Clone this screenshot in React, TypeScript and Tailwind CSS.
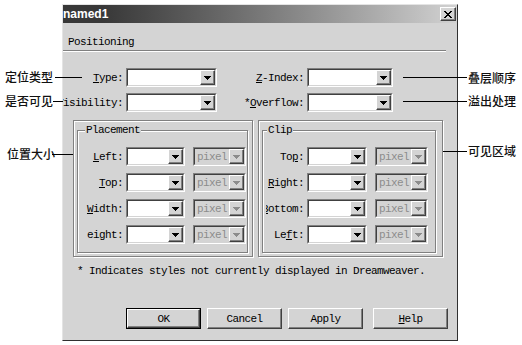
import React from "react";

const mono = "font-['Liberation_Mono',monospace] text-[11px] leading-[12px] tracking-[-0.6px]";
const cjk = "font-['Noto_Sans_CJK_SC',sans-serif] font-medium text-[12px] leading-[14px] text-[#111]";

function Arrow({ disabled }: { disabled?: boolean }) {
  return (
    <svg width="7" height="4" viewBox="0 0 7 4" shapeRendering="crispEdges">
      <path d="M0 0H7V1H6V2H5V3H4V4H3V3H2V2H1V1H0Z" fill={disabled ? "#8c8c8c" : "#000"} />
    </svg>
  );
}

function Combo({ w, disabled, value, className = "" }: { w: string; disabled?: boolean; value?: string; className?: string }) {
  return (
    <div className={`${w} ${className} h-[19px] shrink-0 border border-t-[#808080] border-l-[#808080] border-b-white border-r-white`}>
      <div
        className={`flex h-full border border-t-[#404040] border-l-[#404040] border-b-[#d4d4d4] border-r-[#d4d4d4] ${
          disabled ? "bg-[#d4d4d4]" : "bg-white"
        }`}
      >
        <div className={`flex-1 flex items-center pl-[2px] ${mono} ${disabled ? "text-[#8c8c8c]" : "text-black"}`}>{value}</div>
        <div className="w-[15px] h-full flex items-center justify-center bg-[#d4d4d4] border border-t-white border-l-white border-b-[#404040] border-r-[#404040] shadow-[inset_-1px_-1px_0_#808080]">
          <Arrow disabled={disabled} />
        </div>
      </div>
    </div>
  );
}

function Label({ w, children, className = "" }: { w: string; children: React.ReactNode; className?: string }) {
  return (
    <div className={`${w} ${className} shrink-0 flex justify-end overflow-hidden`}>
      <span className={`shrink-0 whitespace-nowrap ${mono}`}>{children}</span>
    </div>
  );
}

function U({ children }: { children: React.ReactNode }) {
  return <u className="underline underline-offset-[1px]">{children}</u>;
}

function Group({
  title,
  outerW,
  innerPr,
  titleLeft,
  children,
}: {
  title: string;
  outerW: string;
  innerPr: string;
  titleLeft: string;
  children: React.ReactNode;
}) {
  return (
    <div
      className={`${outerW} ${innerPr} h-[137px] shrink-0 border border-[#808080] shadow-[inset_1px_1px_0_#fff,1px_1px_0_#fff] pt-[9px] pl-[3px] pb-[3px]`}
    >
      <div className="relative h-full border border-[#808080] shadow-[inset_1px_1px_0_#fff,1px_1px_0_#fff] pt-[16px]">
        <span className={`absolute ${titleLeft} top-[-7px] bg-[#d4d4d4] px-[1px] ${mono}`}>{title}</span>
        <div className="flex flex-col gap-[7px]">{children}</div>
      </div>
    </div>
  );
}

function Btn({ children, def, className = "" }: { children: React.ReactNode; def?: boolean; className?: string }) {
  return (
    <div className={`w-[75px] h-[21px] shrink-0 ${def ? "border border-black" : ""} ${className}`}>
      <div className="h-full w-full flex items-center justify-center bg-[#d4d4d4] border border-t-white border-l-white border-b-[#404040] border-r-[#404040] shadow-[inset_-1px_-1px_0_#808080]">
        <span className={mono}>{children}</span>
      </div>
    </div>
  );
}

function PRow({ label }: { label: React.ReactNode }) {
  return (
    <div className="flex items-center h-[19px]">
      <Label w="w-[45px]">{label}</Label>
      <Combo w="w-[59px]" className="ml-[3px]" />
      <Combo w="w-[53px]" className="ml-[8px]" disabled value="pixel" />
    </div>
  );
}

function CRow({ label, lw = "w-[41px]", lm = "" }: { label: React.ReactNode; lw?: string; lm?: string }) {
  return (
    <div className="flex items-center h-[19px]">
      <Label w={lw} className={lm}>
        {label}
      </Label>
      <Combo w="w-[60px]" className="ml-[3px]" />
      <Combo w="w-[53px]" className="ml-[8px]" disabled value="pixel" />
    </div>
  );
}

export default function App() {
  return (
    <div className="relative w-[522px] h-[345px] bg-white overflow-hidden text-black">
      <div className="pl-[62px] pt-[4px]">
        <div className="w-[396px] h-[337px] flex flex-col bg-[#d4d4d4] border-t border-l border-t-[#e4e4e4] border-l-[#e4e4e4] border-r border-b border-r-[#303030] border-b-[#303030]">
          {/* title bar */}
          <div className="h-[18px] shrink-0 flex items-center justify-between bg-linear-to-r from-[#383838] from-10% to-[#d2d2d2] pr-[1px]">
            <span className="font-['Liberation_Sans',sans-serif] font-bold text-[12px] leading-[14px] text-white">named1</span>
            <div className="w-[16px] h-[14px] flex items-center justify-center bg-[#d4d4d4] border border-t-white border-l-white border-b-[#404040] border-r-[#404040] shadow-[inset_-1px_-1px_0_#808080]">
              <svg width="8" height="7" viewBox="0 0 8 7" shapeRendering="crispEdges">
                <path
                  d="M0 0H2V1H3V2H5V1H6V0H8V1H7V2H6V3H5V4H6V5H7V6H8V7H6V6H5V5H3V6H2V7H0V6H1V5H2V4H3V3H2V2H1V1H0Z"
                  fill="#000"
                />
              </svg>
            </div>
          </div>

          {/* header */}
          <div className={`mt-[13px] pl-[5px] ${mono}`}>Positioning</div>
          <div className="mt-[2px] mr-[11px] h-[2px] border-t border-t-[#808080] border-b border-b-white" />

          {/* row 1 */}
          <div className="mt-[16px] flex items-center h-[19px]">
            <Label w="w-[60px]">
              <U>T</U>ype:
            </Label>
            <Combo w="w-[91px]" className="ml-[3px]" />
            <Label w="w-[87px]">
              <U>Z</U>-Index:
            </Label>
            <Combo w="w-[86px]" className="ml-[3px]" />
          </div>

          {/* row 2 */}
          <div className="mt-[6px] flex items-center h-[19px]">
            <Label w="w-[60px]">
              <U>V</U>isibility:
            </Label>
            <Combo w="w-[91px]" className="ml-[3px]" />
            <Label w="w-[87px]">
              *<U>O</U>verflow:
            </Label>
            <Combo w="w-[86px]" className="ml-[3px]" />
          </div>

          {/* groups */}
          <div className="mt-[8px] flex pl-[10px] gap-[5px]">
            <Group title="Placement" outerW="w-[180px]" innerPr="pr-[4px]" titleLeft="left-[7px]">
              <PRow
                label={
                  <>
                    <U>L</U>eft:
                  </>
                }
              />
              <PRow
                label={
                  <>
                    <U>T</U>op:
                  </>
                }
              />
              <PRow
                label={
                  <>
                    <U>W</U>idth:
                  </>
                }
              />
              <PRow label="eight:" />
            </Group>
            <Group title="Clip" outerW="w-[185px]" innerPr="pr-[6px]" titleLeft="left-[4px]">
              <CRow
                label={
                  <>
                    To<U>p</U>:
                  </>
                }
              />
              <CRow
                label={
                  <>
                    <U>R</U>ight:
                  </>
                }
              />
              <CRow
                lw="w-[38px]"
                lm="ml-[3px]"
                label={
                  <>
                    <U>B</U>ottom:
                  </>
                }
              />
              <CRow
                label={
                  <>
                    Le<U>f</U>t:
                  </>
                }
              />
            </Group>
          </div>

          {/* note */}
          <div className={`mt-[8px] pl-[14px] ${mono}`}>* Indicates styles not currently displayed in Dreamweaver.</div>

          {/* buttons */}
          <div className="mt-[31px] flex pl-[63px]">
            <Btn def>OK</Btn>
            <Btn className="ml-[6px]">Cancel</Btn>
            <Btn className="ml-[6px]">Apply</Btn>
            <Btn className="ml-[10px]">
              <U>H</U>elp
            </Btn>
          </div>
        </div>
      </div>

      {/* callouts */}
      <div className={`absolute left-[5px] top-[70px] ${cjk}`}>定位类型</div>
      <div className="absolute left-[55px] top-[77px] w-[27px] h-px bg-black" />
      <div className={`absolute left-[5px] top-[94px] ${cjk}`}>是否可见</div>
      <div className="absolute left-[53px] top-[101px] w-[10px] h-px bg-black" />
      <div className={`absolute left-[7px] top-[147px] ${cjk}`}>位置大小</div>
      <div className="absolute left-[52px] top-[154px] w-[21px] h-px bg-black" />

      <div className={`absolute left-[468px] top-[71px] ${cjk}`}>叠层顺序</div>
      <div className="absolute left-[403px] top-[77px] w-[64px] h-px bg-black" />
      <div className={`absolute left-[468px] top-[94px] ${cjk}`}>溢出处理</div>
      <div className="absolute left-[403px] top-[101px] w-[64px] h-px bg-black" />
      <div className={`absolute left-[468px] top-[144px] ${cjk}`}>可见区域</div>
      <div className="absolute left-[443px] top-[151px] w-[24px] h-px bg-black" />
    </div>
  );
}
